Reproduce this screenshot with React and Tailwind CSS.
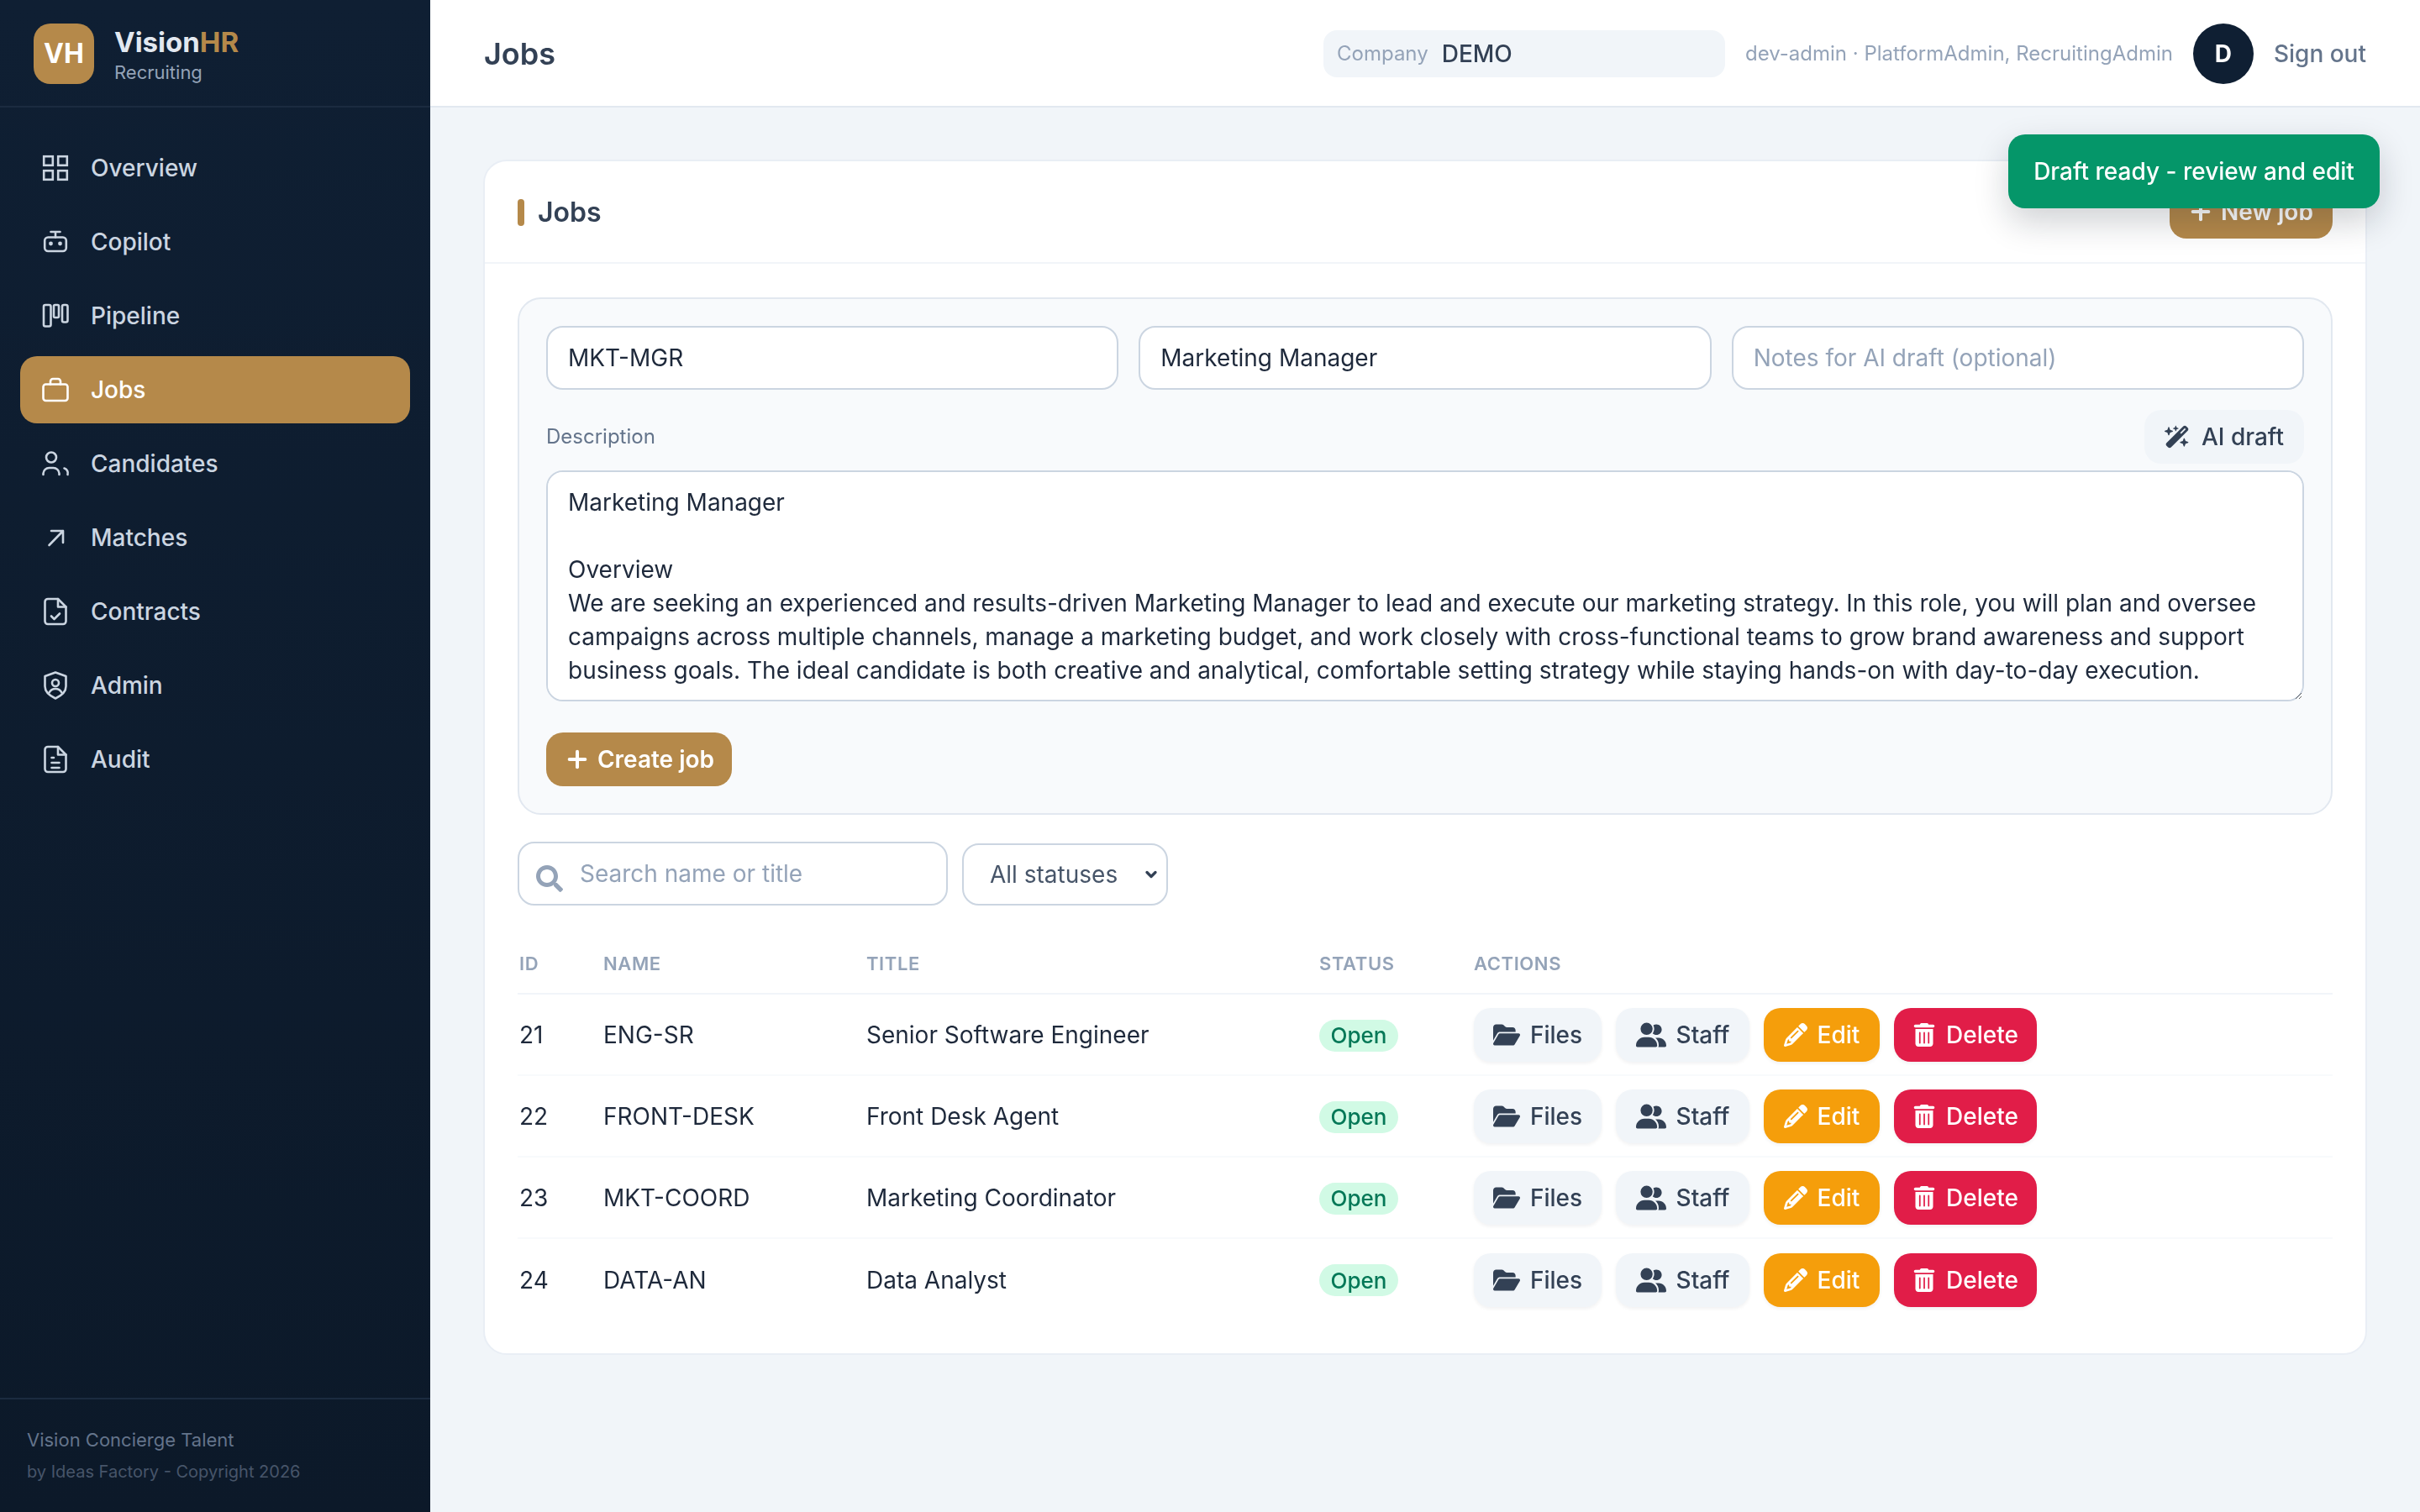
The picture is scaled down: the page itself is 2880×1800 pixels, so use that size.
import React from 'react';
import { FaFolderOpen, FaUserGroup, FaPencil, FaTrashCan, FaWandMagicSparkles } from 'react-icons/fa6';
import { FaSearch } from 'react-icons/fa';
import { Plus, ChevronDown } from 'lucide-react';

const NavIcon = ({ children }) => (
  <svg width="36" height="36" viewBox="0 0 36 36" fill="none" stroke="currentColor" strokeWidth="2.6" strokeLinecap="round" strokeLinejoin="round" className="shrink-0">
    {children}
  </svg>
);

const navItems = [
  {
    label: 'Overview',
    icon: (
      <g strokeLinecap="butt" strokeLinejoin="miter">
        <rect x="4.2" y="4.2" width="10.6" height="10.6" />
        <rect x="21.2" y="4.2" width="10.6" height="10.6" />
        <rect x="4.2" y="21.2" width="10.6" height="10.6" />
        <rect x="21.2" y="21.2" width="10.6" height="10.6" />
      </g>
    ),
  },
  {
    label: 'Copilot',
    icon: (
      <>
        <rect x="5.2" y="12.5" width="25.6" height="16.5" rx="4" />
        <path d="M12.5 6h11M18 6v6.5" />
        <circle cx="12.5" cy="20" r="2.4" fill="currentColor" stroke="none" />
        <circle cx="23.5" cy="20" r="2.4" fill="currentColor" stroke="none" />
      </>
    ),
  },
  {
    label: 'Pipeline',
    icon: (
      <>
        <rect x="4" y="5" width="8.5" height="25.5" rx="2" />
        <rect x="16" y="5" width="6" height="15" rx="1.5" />
        <rect x="26" y="5" width="6.5" height="20.5" rx="2" />
      </>
    ),
  },
  {
    label: 'Jobs',
    active: true,
    icon: (
      <>
        <rect x="3.5" y="11.5" width="29" height="19.5" rx="3" />
        <path d="M12 11.5V8a3 3 0 0 1 3-3h6a3 3 0 0 1 3 3v3.5" />
      </>
    ),
  },
  {
    label: 'Candidates',
    icon: (
      <>
        <circle cx="13" cy="10.5" r="6" />
        <path d="M3.5 31v-1.5a7 7 0 0 1 7-6.5h5a7 7 0 0 1 7 6.5V31" />
        <path d="M28.5 23.5a6 6 0 0 1 4 7.5" />
      </>
    ),
  },
  {
    label: 'Matches',
    icon: <path d="M10.5 27 27 10M13 10h14v14" />,
  },
  {
    label: 'Contracts',
    icon: (
      <>
        <path d="M21 3H9a3.5 3.5 0 0 0-3.5 3.5v23A3.5 3.5 0 0 0 9 33h18a3.5 3.5 0 0 0 3.5-3.5V12.5z" />
        <path d="M21 3v9.5h9.5" />
        <path d="M13 23.5l3.5 3.5 6.5-6.5" />
      </>
    ),
  },
  {
    label: 'Admin',
    icon: (
      <>
        <path d="M18 2.5 30.5 7v12c0 6.5-5 11-12.5 14.5C10.500 30 5.500 25.500 5.500 19V7z" />
        <circle cx="18" cy="15" r="4" />
        <path d="M10.500 26.500a8.500 8.500 0 0 1 15 0" />
      </>
    ),
  },
  {
    label: 'Audit',
    icon: (
      <>
        <path d="M21 3H9a3.500 3.500 0 0 0-3.500 3.500v23A3.500 3.500 0 0 0 9 33h18a3.500 3.500 0 0 0 3.500-3.500V12.500z" />
        <path d="M21 3v9.500h9.500" />
        <path d="M13.500 16h2.500M13.500 22h9M13.500 28h9" />
      </>
    ),
  },
];

const jobs = [
  { id: 21, name: 'ENG-SR', title: 'Senior Software Engineer' },
  { id: 22, name: 'FRONT-DESK', title: 'Front Desk Agent' },
  { id: 23, name: 'MKT-COORD', title: 'Marketing Coordinator' },
  { id: 24, name: 'DATA-AN', title: 'Data Analyst' },
];

const description = `Marketing Manager

Overview
We are seeking an experienced and results-driven Marketing Manager to lead and execute our marketing strategy. In this role, you will plan and oversee campaigns across multiple channels, manage a marketing budget, and work closely with cross-functional teams to grow brand awareness and support business goals. The ideal candidate is both creative and analytical, comfortable setting strategy while staying hands-on with day-to-day execution.`;

const inputClass = 'h-[76px] flex-1 min-w-0 rounded-[20px] border-2 border-[#cbd5e1] bg-white px-[24px] text-[28px] text-[#1e293b] placeholder:text-[#94a3b8] outline-none';

const Sidebar = () => (
  <aside className="flex w-[512px] shrink-0 flex-col bg-gradient-to-b from-[#0f1f33] to-[#0c1929]">
    <div className="flex h-[128px] items-center gap-[24px] border-b-2 border-[#1b2b40] pl-[40px] pt-[2px]">
      <div className="flex h-[72px] w-[72px] items-center justify-center rounded-[20px] bg-[#b5894a] text-[32px] font-bold text-white">VH</div>
      <div className="pt-[4px]">
        <div className="text-[33px] font-bold leading-[40px] text-[#e2e8f0]">
          Vision<span className="text-[#b5894a]">HR</span>
        </div>
        <div className="text-[22px] leading-[32px] text-[#94a3b8]">Recruiting</div>
      </div>
    </div>
    <nav className="flex flex-1 flex-col gap-[8px] px-[24px] pt-[32px]">
      {navItems.map((item) => (
        <div
          key={item.label}
          className={`flex h-[80px] items-center gap-[24px] rounded-[20px] pl-[24px] text-[28px] font-medium ${
            item.active ? 'bg-[#b5894a] text-white' : 'text-[#cbd5e1]'
          }`}
        >
          <NavIcon>{item.icon}</NavIcon>
          {item.label}
        </div>
      ))}
    </nav>
    <div className="h-[136px] border-t-2 border-[#1b2b40] pl-[32px] pt-[30px]">
      <div className="text-[22px] leading-[36px] text-[#64748b]">Vision Concierge Talent</div>
      <div className="text-[20px] leading-[40px] text-[#475569]">by Ideas Factory - Copyright 2026</div>
    </div>
  </aside>
);

const Header = () => (
  <header className="flex h-[128px] items-center border-b-2 border-[#e2e8f0] bg-white pl-[64px] pr-[64px] pt-[2px]">
    <h1 className="text-[36px] font-semibold text-[#334155]">Jobs</h1>
    <div className="ml-auto flex h-[56px] w-[478px] items-center gap-[16px] rounded-[16px] bg-[#f1f5f9] pl-[16px]">
      <span className="text-[24px] text-[#94a3b8]">Company</span>
      <span className="text-[28px] font-medium text-[#334155]">DEMO</span>
    </div>
    <span className="ml-[24px] text-[24px] text-[#94a3b8]">dev-admin · PlatformAdmin, RecruitingAdmin</span>
    <div className="ml-[24px] flex h-[72px] w-[72px] items-center justify-center rounded-full bg-[#0f1f33] text-[28px] font-bold text-white">D</div>
    <span className="ml-[24px] text-[28px] font-medium text-[#64748b]">Sign out</span>
  </header>
);

const ActionButton = ({ icon, label, className }) => (
  <button className={`flex h-[64px] items-center justify-center gap-[12px] rounded-[20px] text-[28px] font-medium shadow-[0_2px_4px_rgba(15,23,42,0.06)] ${className}`}>
    {icon}
    {label}
  </button>
);

const JobsTable = () => (
  <table className="w-full table-fixed text-left">
    <thead>
      <tr className="h-[76px] border-b-2 border-[#f1f5f9] text-[22px] font-semibold uppercase tracking-[0.6px] text-[#94a3b8]">
        <th className="w-[100px] pl-[2px] pt-[6px] font-semibold">ID</th>
        <th className="w-[313px] pl-[2px] pt-[6px] font-semibold">Name</th>
        <th className="w-[539px] pl-[2px] pt-[6px] font-semibold">Title</th>
        <th className="w-[186px] pl-[2px] pt-[6px] font-semibold">Status</th>
        <th className="pt-[6px] font-semibold">Actions</th>
      </tr>
    </thead>
    <tbody>
      {jobs.map((job, index) => (
        <tr key={job.id} className={`h-[97px] text-[28px] text-[#1e293b] ${index < jobs.length - 1 ? 'border-b-2 border-[#f8fafc]' : ''}`}>
          <td className="pl-[2px] pt-[1px]">{job.id}</td>
          <td className="pl-[2px] pt-[1px]">{job.name}</td>
          <td className="pl-[2px] pt-[1px]">{job.title}</td>
          <td className="pl-[2px] pt-[1px]">
            <span className="inline-flex h-[38px] w-[94px] items-center justify-center rounded-full bg-[#d1fae5] text-[26px] font-medium text-[#047857]">Open</span>
          </td>
          <td className="pt-[1px]">
            <div className="flex gap-[17px]">
              <ActionButton className="w-[152px] bg-[#f1f5f9] text-[#334155]" icon={<FaFolderOpen size={32} />} label="Files" />
              <ActionButton className="w-[159px] bg-[#f1f5f9] text-[#334155]" icon={<FaUserGroup size={36} />} label="Staff" />
              <ActionButton className="w-[138px] bg-[#f59e0b] text-white" icon={<FaPencil size={28} />} label="Edit" />
              <ActionButton className="w-[170px] bg-[#e11d48] text-white" icon={<FaTrashCan size={28} />} label="Delete" />
            </div>
          </td>
        </tr>
      ))}
    </tbody>
  </table>
);

const App = () => (
  <div className="relative flex min-h-[1800px] bg-[#f1f5f9] font-['Inter',sans-serif]">
    <Sidebar />
    <div className="min-w-0 flex-1">
      <Header />
      <main className="px-[63px] pt-[62px]">
        <section className="rounded-[28px] border-2 border-[#e9eef5] bg-white">
          <div className="flex h-[122px] items-center justify-between border-b-2 border-[#f1f5f9] px-[39px]">
            <h2 className="flex items-center gap-[16px] pt-[2px] text-[32px] font-semibold text-[#334155]">
              <span className="h-[32px] w-[8px] rounded-full bg-[#b5894a]" />
              Jobs
            </h2>
            <button className="flex h-[64px] w-[194px] items-center justify-center gap-[8px] rounded-[20px] bg-[#b5894a] pr-[2px] text-[28px] font-semibold text-white">
              <Plus size={32} strokeWidth={3} />
              New job
            </button>
          </div>
          <div className="px-[39px] pb-[40px] pt-[40px]">
            <div className="rounded-[28px] border-2 border-[#e2e8f0] bg-[#f8fafc] p-[32px]">
              <div className="flex gap-[24px]">
                <input className={inputClass} defaultValue="MKT-MGR" />
                <input className={inputClass} defaultValue="Marketing Manager" />
                <input className={inputClass} placeholder="Notes for AI draft (optional)" />
              </div>
              <div className="mt-[24px] flex h-[64px] items-center justify-between">
                <label className="text-[24px] text-[#64748b]">Description</label>
                <button className="flex h-[64px] w-[190px] items-center justify-center gap-[14px] rounded-[20px] bg-[#f1f5f9] text-[28px] font-medium text-[#334155]">
                  <FaWandMagicSparkles size={30} />
                  AI draft
                </button>
              </div>
              <textarea
                className="mt-[8px] block h-[275px] w-full rounded-[20px] border-2 border-[#cbd5e1] bg-white px-[24px] py-[16px] text-[28px] leading-[40px] text-[#1e293b] outline-none"
                defaultValue={description}
              />
              <button className="mt-[37px] flex h-[64px] w-[221px] items-center justify-center gap-[8px] rounded-[20px] bg-[#b5894a] text-[28px] font-semibold text-white">
                <Plus size={32} strokeWidth={3} />
                Create job
              </button>
            </div>
            <div className="mt-[32px] flex items-end gap-[17px]">
              <div className="relative w-[512px]">
                <FaSearch size={32} className="absolute left-[22px] top-[28px] text-[#94a3b8]" />
                <input className="h-[76px] w-full rounded-[20px] border-2 border-[#cbd5e1] bg-white pl-[72px] text-[28px] text-[#1e293b] placeholder:text-[#94a3b8] outline-none" placeholder="Search name or title" />
              </div>
              <div className="relative">
                <select className="h-[74px] w-[245px] appearance-none rounded-[20px] border-2 border-[#cbd5e1] bg-white pl-[31px] text-[28px] text-[#475569] outline-none">
                  <option>All statuses</option>
                </select>
                <ChevronDown size={20} strokeWidth={4} className="pointer-events-none absolute right-[10px] top-[27px] text-[#334155]" />
              </div>
            </div>
            <div className="mt-[29px]">
              <JobsTable />
            </div>
          </div>
        </section>
      </main>
    </div>
    <div className="absolute right-[48px] top-[160px] flex h-[88px] w-[442px] items-center justify-center rounded-[20px] bg-[#059669] text-[28px] font-medium text-white shadow-[0_16px_40px_rgba(15,23,42,0.2)]">
      Draft ready - review and edit
    </div>
  </div>
);

export default App;
